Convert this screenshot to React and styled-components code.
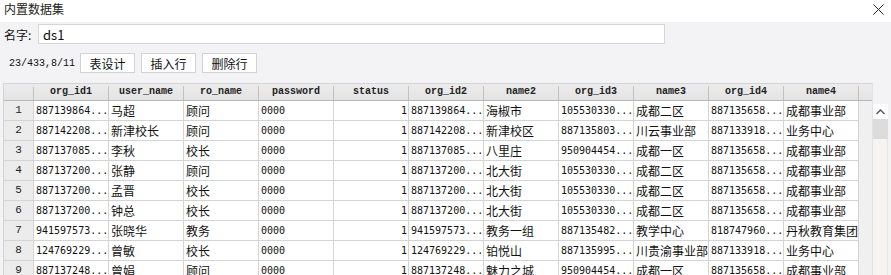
import React from "react";
import styled, { createGlobalStyle } from "styled-components";

const columns = [
  "org_id1",
  "user_name",
  "ro_name",
  "password",
  "status",
  "org_id2",
  "name2",
  "org_id3",
  "name3",
  "org_id4",
  "name4",
];

// number-like columns use the narrow mono font
const numeric = [true, false, false, true, true, true, false, true, false, true, false];

const rows = [
  ["887139864...", "马超", "顾问", "0000", "1", "887139864...", "海椒市", "105530330...", "成都二区", "887135658...", "成都事业部"],
  ["887142208...", "新津校长", "顾问", "0000", "1", "887142208...", "新津校区", "887135803...", "川云事业部", "887133918...", "业务中心"],
  ["887137085...", "李秋", "校长", "0000", "1", "887137085...", "八里庄", "950904454...", "成都一区", "887135658...", "成都事业部"],
  ["887137200...", "张静", "顾问", "0000", "1", "887137200...", "北大街", "105530330...", "成都二区", "887135658...", "成都事业部"],
  ["887137200...", "孟晋", "校长", "0000", "1", "887137200...", "北大街", "105530330...", "成都二区", "887135658...", "成都事业部"],
  ["887137200...", "钟总", "校长", "0000", "1", "887137200...", "北大街", "105530330...", "成都二区", "887135658...", "成都事业部"],
  ["941597573...", "张晓华", "教务", "0000", "1", "941597573...", "教务一组", "887135482...", "教学中心", "818747960...", "丹秋教育集团"],
  ["124769229...", "曾敏", "校长", "0000", "1", "124769229...", "铂悦山", "887135995...", "川贵渝事业部", "887133918...", "业务中心"],
  ["887137248...", "曾娟", "顾问", "0000", "1", "887137248...", "魅力之城", "950904454...", "成都一区", "887135658...", "成都事业部"],
];

function App() {
  return (
    <Dialog>
      <GlobalStyle />
      <TitleBar>
        <Title>内置数据集</Title>
        <Close>
          <svg width="11" height="11" viewBox="0 0 11 11">
            <path d="M0.5 0.5 L10.5 10.5 M10.5 0.5 L0.5 10.5" stroke="#222" strokeWidth="1" fill="none" />
          </svg>
        </Close>
      </TitleBar>

      <NameRow>
        <Label>名字:</Label>
        <NameInput defaultValue="ds1" />
      </NameRow>

      <Toolbar>
        <Counter>23/433,8/11</Counter>
        <Button>表设计</Button>
        <Button>插入行</Button>
        <Button>删除行</Button>
      </Toolbar>

      <TableArea>
        <Table>
          <HeadRow>
            <Corner />
            {columns.map((c) => (
              <HeadCell key={c}>{c}</HeadCell>
            ))}
            <HeadFill />
          </HeadRow>
          {rows.map((r, i) => (
            <Row key={i}>
              <RowNum>{i + 1}</RowNum>
              {r.map((v, j) => (
                <Cell key={j} mono={numeric[j]} right={j === 4}>
                  {v}
                </Cell>
              ))}
              <Fill />
            </Row>
          ))}
        </Table>
        <ScrollBar>
          <ScrollHead />
          <ArrowUp>
            <svg width="9" height="6" viewBox="0 0 9 6">
              <path d="M0.5 5 L4.5 1 L8.5 5" stroke="#555" strokeWidth="1.4" fill="none" />
            </svg>
          </ArrowUp>
          <Thumb />
          <Track />
        </ScrollBar>
      </TableArea>
    </Dialog>
  );
}

export default App;

const GlobalStyle = createGlobalStyle`
  html, body {
    margin: 0;
    padding: 0;
    background: #f3f3f5;
    overflow: hidden;
  }
  * { box-sizing: border-box; }
`;

const cjk = `"Noto Sans CJK SC", "Noto Sans", sans-serif`;

const Dialog = styled.div`
  width: 891px;
  height: 275px;
  overflow: hidden;
  background: #f3f3f5;
  font-family: ${cjk};
  color: #111;
`;

const TitleBar = styled.div`
  height: 22px;
  background: #fff;
  display: flex;
  justify-content: space-between;
  align-items: flex-start;
  padding: 0 7px 0 4px;
`;

const Title = styled.div`
  font-size: 12px;
  line-height: 18px;
  color: #222;
`;

const Close = styled.div`
  padding-top: 4px;
  line-height: 0;
`;

const NameRow = styled.div`
  display: flex;
  align-items: center;
  gap: 4px;
  padding: 2px 0 0 4px;
  height: 22px;
`;

const Label = styled.span`
  font-size: 12px;
  width: 30px;
`;

const NameInput = styled.input`
  width: 627px;
  height: 20px;
  border: 1px solid #d6d6d6;
  background: #fff;
  padding: 0 4px;
  font-family: ${cjk};
  font-size: 13px;
  color: #111;
  outline: none;
`;

const Toolbar = styled.div`
  display: flex;
  align-items: center;
  gap: 6px;
  margin-top: 9px;
  padding-left: 9px;
  height: 20px;
`;

const Counter = styled.span`
  font-family: "Liberation Mono", monospace;
  font-size: 10px;
  width: 65px;
`;

const Button = styled.button`
  width: 55px;
  height: 20px;
  background: #fff;
  border: 1px solid #d2d2d2;
  font-family: ${cjk};
  font-size: 12px;
  color: #111;
  padding: 0;
`;

const TableArea = styled.div`
  display: flex;
  margin: 10px 0 0 3px;
  height: 200px;
`;

const Table = styled.div`
  width: 869px;
  border-top: 1px solid #d4d4d4;
  border-left: 1px solid #d4d4d4;
  background: #f0f0f0;
`;

const HeadRow = styled.div`
  display: flex;
  height: 17px;
  background: linear-gradient(#ececec, #e4e4e4);
  border-bottom: 1px solid #b8b8b8;
`;

const Corner = styled.div`
  width: 30px;
  border-right: 1px solid #c8c0b0;
  margin: 3px 0 0;
`;

const HeadCell = styled.div`
  width: 75px;
  flex: none;
  font-family: "Liberation Mono", monospace;
  font-weight: bold;
  font-size: 10px;
  line-height: 16px;
  text-align: center;
  color: #222;
  border-right: 1px solid #c8c0b0;
  margin-top: 2px;
  height: 14px;
  line-height: 12px;
`;

const HeadFill = styled.div`
  flex: 1;
`;

const Row = styled.div`
  display: flex;
  height: 20px;
`;

const RowNum = styled.div`
  width: 30px;
  flex: none;
  background: #ececec;
  border-right: 1px solid #d4d4d4;
  border-bottom: 1px solid #d4d4d4;
  font-family: "Liberation Mono", monospace;
  font-size: 11px;
  line-height: 19px;
  text-align: center;
  color: #222;
`;

const Cell = styled.div`
  width: 75px;
  flex: none;
  background: #fff;
  border-right: 1px solid #d4d4d4;
  border-bottom: 1px solid #d4d4d4;
  padding: 0 1px 0 2px;
  white-space: nowrap;
  overflow: hidden;
  text-align: ${(p) => (p.right ? "right" : "left")};
  font-family: ${(p) => (p.mono ? `"DejaVu Sans Mono", monospace` : cjk)};
  font-size: ${(p) => (p.mono ? "10px" : "12px")};
  line-height: 19px;
  color: #111;
`;

const Fill = styled.div`
  flex: 1;
`;

const ScrollBar = styled.div`
  width: 16px;
  display: flex;
  flex-direction: column;
  border-left: 1px solid #e2e2e2;
  background: #f6f5f2;
`;

const ScrollHead = styled.div`
  height: 21px;
  background: #f3f3f5;
`;

const ArrowUp = styled.div`
  height: 15px;
  background: #fff;
  display: flex;
  align-items: center;
  justify-content: center;
`;

const Thumb = styled.div`
  height: 20px;
  background: #dcdcdc;
`;

const Track = styled.div`
  flex: 1;
  background: #f7f5f1;
  border-right: 1px solid #eee6da;
`;
